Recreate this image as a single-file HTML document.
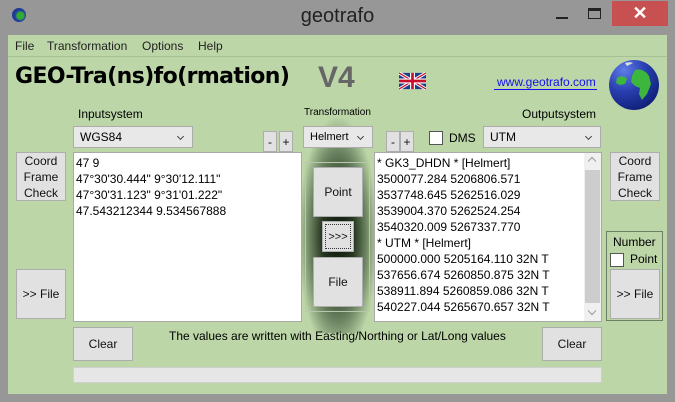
<!DOCTYPE html>
<html><head><meta charset="utf-8"><style>
*{box-sizing:border-box;margin:0;padding:0}
body{width:675px;height:402px;background:#979797;position:relative;overflow:hidden;font-family:"Liberation Sans",sans-serif;font-size:12px;color:#000}
.a{position:absolute}
.btn{position:absolute;background:#e1e1e1;border:1px solid #adadad;display:flex;align-items:center;justify-content:center;text-align:center;font-size:12px;line-height:16px;color:#111}
.combo{position:absolute;background:#e8e8e8;border:1px solid #acacac;padding-left:6px;display:flex;align-items:center}
.combo:after{content:"";position:absolute;right:9px;top:7px;width:4px;height:4px;border-right:1px solid #444;border-bottom:1px solid #444;transform:rotate(45deg)}
.tb{position:absolute;background:#fff;border:1px solid #a9a9a9;padding:2px 2px;line-height:16px;font-size:12px;white-space:pre}
.cb{position:absolute;width:14px;height:14px;background:#fff;border:1px solid #555}
</style></head><body>
<div class="a" style="left:12px;top:8px;width:14px;height:14px;border-radius:50%;background:radial-gradient(circle at 60% 55%,#3a3 0 30%,#2340a0 45%,#132a80 100%)"></div>
<div class="a" style="left:0;width:675px;top:5px;text-align:center;font-size:20px;color:#222">geotrafo</div>
<div class="a" style="left:556px;top:17px;width:12px;height:2px;background:#222"></div>
<div class="a" style="left:588px;top:8px;width:13px;height:11px;border:1px solid #222;border-top:3px solid #222"></div>
<div class="a" style="left:612px;top:1px;width:56px;height:25px;background:#c75050;color:#fff;font-size:18px;font-weight:bold;text-align:center;line-height:24px">✕</div>
<div class="a" style="left:8px;top:35px;width:659px;height:359px;background:#bcd6a8"></div>
<div class="a" style="left:8px;top:56px;width:659px;height:1px;background:#a8c096"></div>
<div class="a" style="left:15px;top:39px;font-size:12px;color:#222">File</div>
<div class="a" style="left:47px;top:39px;font-size:12px;color:#222">Transformation</div>
<div class="a" style="left:142px;top:39px;font-size:12px;color:#222">Options</div>
<div class="a" style="left:198px;top:39px;font-size:12px;color:#222">Help</div>
<div class="a" style="left:15px;top:64px;font-family:'Comic Sans MS','DejaVu Sans',sans-serif;font-weight:bold;font-size:22px;letter-spacing:-0.6px;color:#000">GEO-Tra(ns)fo(rmation)</div>
<div class="a" style="left:318px;top:61px;font-weight:bold;font-size:30px;color:#666">V4</div>
<svg class="a" style="left:399px;top:72px" width="27" height="18" viewBox="0 0 60 36"><rect width="60" height="36" fill="#1e3c8c"/><path d="M0 0L60 36M60 0L0 36" stroke="#fff" stroke-width="7"/><path d="M0 0L60 36M60 0L0 36" stroke="#c8102e" stroke-width="3"/><path d="M30 0V36M0 18H60" stroke="#fff" stroke-width="11"/><path d="M30 0V36M0 18H60" stroke="#c8102e" stroke-width="6"/></svg>
<div class="a" style="left:497px;top:75px;color:#1010ee;font-size:12px">www.geotrafo.com</div>
<div class="a" style="left:494px;top:89px;width:103px;height:1px;background:#1010ee"></div>
<div class="a" style="left:609px;top:60px;width:50px;height:50px;border-radius:50%;background:radial-gradient(circle at 30% 20%,#5d7de8 0,#2a3fb0 40%,#0f1f78 80%)"></div>
<svg class="a" style="left:609px;top:60px" width="50" height="50"><path d="M26 10c6-2 12 2 14 6l2 8-4 10-5 6-3-6 1-6-5-2-4-4 1-6z" fill="#3db63d"/><path d="M8 18c4-3 8-2 10 1l-2 5-5 1-4-2z" fill="#3db63d"/><path d="M16 3c3-1 6-1 8 0l-6 3z" fill="#ddd"/></svg>
<div class="a" style="left:78px;top:107px">Inputsystem</div>
<div class="combo" style="left:73px;top:126px;width:120px;height:22px">WGS84</div>
<div class="btn" style="left:263px;top:131px;width:14px;height:21px">-</div>
<div class="btn" style="left:279px;top:131px;width:14px;height:21px">+</div>
<div class="a" style="left:300px;top:118px;width:76px;height:215px;background:radial-gradient(ellipse 40px 120px at 50% 55%,#0d1a0d 0%,#26361f 40%,#6f8764 72%,#bcd6a8 100%)"></div>
<div class="a" style="left:304px;top:107px;font-size:10px">Transformation</div>
<div class="combo" style="left:303px;top:126px;width:70px;height:22px;font-size:11px">Helmert</div>
<div class="btn" style="left:386px;top:131px;width:14px;height:21px">-</div>
<div class="btn" style="left:400px;top:131px;width:14px;height:21px">+</div>
<div class="cb" style="left:429px;top:131px"></div>
<div class="a" style="left:449px;top:131px">DMS</div>
<div class="combo" style="left:483px;top:126px;width:118px;height:22px">UTM</div>
<div class="a" style="left:522px;top:107px">Outputsystem</div>
<div class="btn" style="left:16px;top:152px;width:50px;height:49px">Coord<br>Frame<br>Check</div>
<div class="btn" style="left:16px;top:269px;width:50px;height:50px">&gt;&gt; File</div>
<div class="tb" style="left:73px;top:152px;width:229px;height:170px">47 9
47°30'30.444" 9°30'12.111"
47°30'31.123" 9°31'01.222"
47.543212344 9.534567888</div>
<div class="a" style="left:305px;top:162px;width:65px;height:150px;border:1px solid #b8c8ac"></div>
<div class="btn" style="left:313px;top:167px;width:50px;height:50px">Point</div>
<div class="btn" style="left:322px;top:221px;width:32px;height:31px;outline:1px dotted #333;outline-offset:-4px;font-size:11px">&gt;&gt;&gt;</div>
<div class="btn" style="left:313px;top:257px;width:50px;height:50px">File</div>
<div class="tb" style="left:374px;top:152px;width:228px;height:170px">* GK3_DHDN * [Helmert]
3500077.284 5206806.571
3537748.645 5262516.029
3539004.370 5262524.254
3540320.009 5267337.770
* UTM * [Helmert]
500000.000 5205164.110 32N T
537656.674 5260850.875 32N T
538911.894 5260859.086 32N T
540227.044 5265670.657 32N T</div>
<div class="a" style="left:584px;top:153px;width:17px;height:168px;background:#f0f0f0"></div>
<div class="a" style="left:585px;top:170px;width:15px;height:133px;background:#cdcdcd"></div>
<div class="a" style="left:589px;top:158px;width:6px;height:6px;border-left:1px solid #999;border-top:1px solid #999;transform:rotate(45deg)"></div>
<div class="a" style="left:589px;top:308px;width:6px;height:6px;border-right:1px solid #999;border-bottom:1px solid #999;transform:rotate(45deg)"></div>
<div class="btn" style="left:610px;top:152px;width:50px;height:49px">Coord<br>Frame<br>Check</div>
<div class="a" style="left:606px;top:231px;width:57px;height:90px;border:1px solid #6f7f66"></div>
<div class="a" style="left:613px;top:235px">Number</div>
<div class="cb" style="left:610px;top:253px"></div>
<div class="a" style="left:630px;top:252px">Point</div>
<div class="btn" style="left:610px;top:269px;width:50px;height:50px">&gt;&gt; File</div>
<div class="btn" style="left:73px;top:327px;width:60px;height:34px">Clear</div>
<div class="a" style="left:169px;top:329px">The values are written with Easting/Northing or Lat/Long values</div>
<div class="btn" style="left:542px;top:327px;width:60px;height:34px">Clear</div>
<div class="a" style="left:73px;top:367px;width:529px;height:16px;background:#e6e6e6;border:1px solid #cfcfcf"></div>
</body></html>
